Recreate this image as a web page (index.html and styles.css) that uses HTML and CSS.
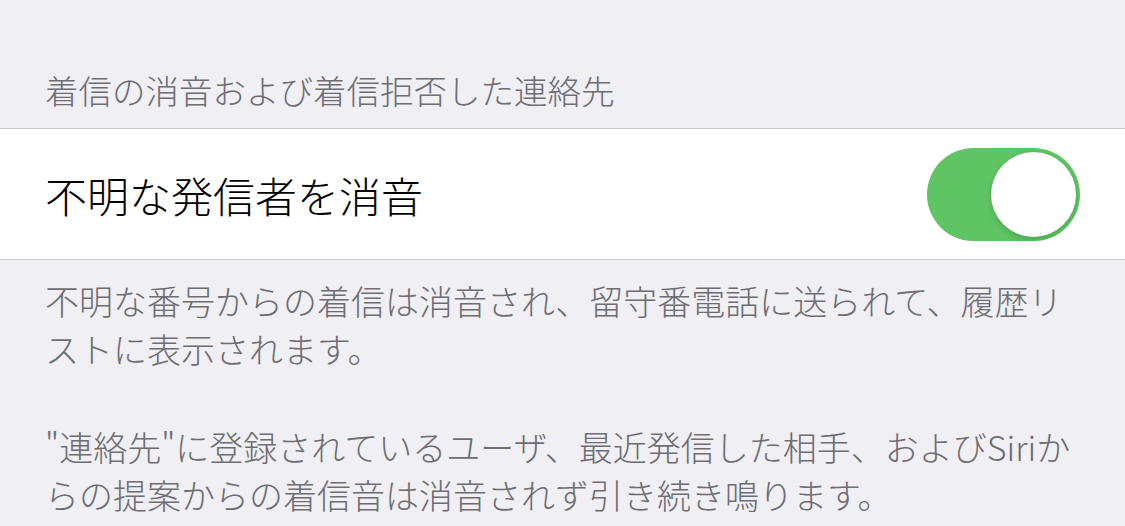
FILE: index.html
```html
<!DOCTYPE html>
<html lang="ja">

<head>
  <meta charset="UTF-8">
  <meta name="viewport" content="width=device-width, initial-scale=1.0">
  <title>着信の消音</title>
  <link rel="stylesheet" href="styles.css">
</head>

<body>
  <div class="section-header">着信の消音および着信拒否した連絡先</div>

  <div class="cell">
    <span class="cell-title">不明な発信者を消音</span>
    <div class="toggle on">
      <div class="knob"></div>
    </div>
  </div>

  <div class="section-footer">
    <p>不明な番号からの着信は消音され、留守番電話に送られて、履歴リストに表示されます。</p>
    <p>"連絡先"に登録されているユーザ、最近発信した相手、およびSiriからの提案からの着信音は消音されず引き続き鳴ります。</p>
  </div>
</body>

</html>
```

FILE: styles.css
```css
body {
  margin: 0;
  background: #efeff4;
  font-family: "Noto Sans CJK JP", "Noto Sans", sans-serif;
  font-weight: 300;
  overflow: hidden;
}

.section-header {
  padding: 70px 45px 18px;
  font-size: 33.5px;
  line-height: 40px;
  color: #6d6d72;
}

.cell {
  display: flex;
  align-items: center;
  justify-content: space-between;
  height: 130px;
  padding: 0 45px;
  background: #fff;
  border-top: 1px solid #c8c7cc;
  border-bottom: 1px solid #c8c7cc;
}

.cell-title {
  font-size: 42px;
  color: #000;
}

.toggle {
  position: relative;
  width: 153px;
  height: 93px;
  border-radius: 47px;
  background: #e5e5ea;
}

.toggle.on {
  background: #5fc463;
}

.knob {
  position: absolute;
  top: 4px;
  right: 4px;
  width: 85px;
  height: 85px;
  border-radius: 50%;
  background: #fff;
  box-shadow: 0 3px 6px rgba(0, 0, 0, 0.15), 0 0 1px rgba(0, 0, 0, 0.1);
}

.section-footer {
  padding: 17px 35px 0 45px;
  font-size: 34px;
  line-height: 48px;
  color: #6d6d72;
}

.section-footer p {
  margin: 0 0 50px;
}

.section-footer p:last-child {
  margin-bottom: 0;
}
```
